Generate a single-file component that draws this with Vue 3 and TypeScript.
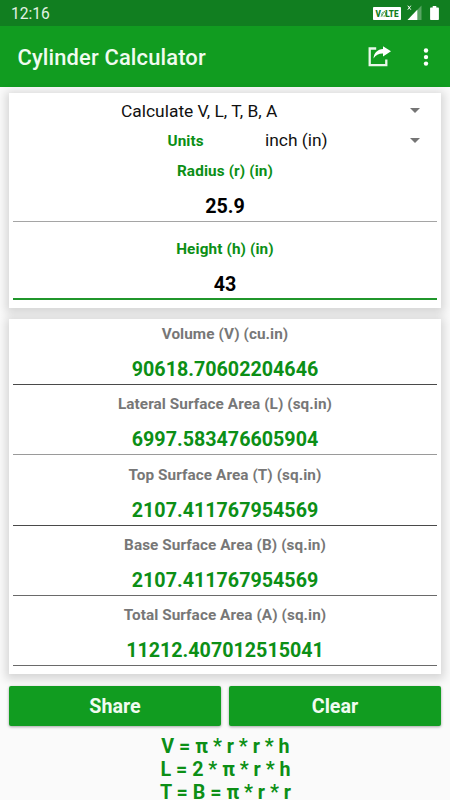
<script setup lang="ts">
import { ref } from 'vue'

interface Result {
  label: string
  value: string
  tone: string
}

const radius = ref('25.9')
const height = ref('43')

const results = ref<Result[]>([
  { label: 'Volume (V) (cu.in)', value: '90618.70602204646', tone: 'dark' },
  { label: 'Lateral Surface Area (L) (sq.in)', value: '6997.583476605904', tone: 'light' },
  { label: 'Top Surface Area (T) (sq.in)', value: '2107.411767954569', tone: 'dark' },
  { label: 'Base Surface Area (B) (sq.in)', value: '2107.411767954569', tone: 'mid' },
  { label: 'Total Surface Area (A) (sq.in)', value: '11212.407012515041', tone: 'mid' },
])

const formulas: string[] = ['V = π * r * r * h', 'L = 2 * π * r * h', 'T = B = π * r * r']

function clearAll(): void {
  radius.value = ''
  height.value = ''
  results.value.forEach((r) => (r.value = ''))
}
</script>

<template>
  <div class="screen">
    <div class="status">
      <span class="clock">12:16</span>
      <svg class="volte" width="28" height="13" viewBox="0 0 28 13">
        <rect width="28" height="13" rx="0.8" fill="#fff" />
        <text x="2.4" y="9.6" class="volte-text">V</text>
        <path d="M9.3 9.3a1.7 2.4 0 0 1 1.2-4.2M11.4 4.6a1.7 2.4 0 0 1-1 4.6M8 9.8l4.2-6.2" fill="none" stroke="#4a9a52" stroke-width="0.9" />
        <text x="12.2" y="9.6" class="volte-text">LTE</text>
      </svg>
      <svg class="signal" width="15" height="15" viewBox="0 0 15 15">
        <path d="M14.5 0.5V15H0.5z" fill="#fff" fill-opacity="0.3" />
        <path d="M10.3 4.7V15H0.5z" fill="#fff" />
        <path d="M0.8 0.7l3 4M3.8 0.7l-3 4" stroke="#fff" stroke-width="1" />
      </svg>
      <svg class="battery" width="9" height="14" viewBox="0 0 9 14">
        <path d="M2.7 0h3.6v1.5H8.2a.7.7 0 0 1 .7.7v11.1a.7.7 0 0 1-.7.7H.8a.7.7 0 0 1-.7-.7V2.2a.7.7 0 0 1 .7-.7h1.9z" fill="#fff" />
      </svg>
    </div>
    <header class="bar">
      <h1>Cylinder Calculator</h1>
      <svg class="share-icon" width="24" height="22" viewBox="0 0 24 22">
        <path d="M8.2 2.5H1.7V19.2H18.3V13.4" fill="none" stroke="#e9f7ea" stroke-width="2.3" />
        <path d="M15 0.2L23 5.3L15 10.6V7.6C10.8 7.5 7.8 8.8 5.5 12.6C6 6.7 9.6 3.5 15 3.1z" fill="#fff" />
      </svg>
      <svg class="more" width="6" height="20" viewBox="0 0 6 20">
        <circle cx="3" cy="3.5" r="2.2" fill="#fff" />
        <circle cx="3" cy="10.1" r="2.2" fill="#fff" />
        <circle cx="3" cy="16.6" r="2.2" fill="#fff" />
      </svg>
    </header>
    <main>
      <section class="card inputs">
        <div class="spinner">
          <span class="mode">Calculate V, L, T, B, A</span>
          <i class="caret"></i>
        </div>
        <div class="spinner">
          <span class="units">Units</span>
          <span class="unit">inch (in)</span>
          <i class="caret"></i>
        </div>
        <label class="field">
          <span>Radius (r) (in)</span>
          <input v-model="radius" type="text" />
        </label>
        <label class="field active">
          <span>Height (h) (in)</span>
          <input v-model="height" type="text" />
        </label>
      </section>
      <section class="card results">
        <div v-for="r in results" :key="r.label" class="result" :class="r.tone">
          <span class="name">{{ r.label }}</span>
          <span class="value">{{ r.value }}</span>
        </div>
      </section>
      <div class="actions">
        <button type="button">Share</button>
        <button type="button" @click="clearAll">Clear</button>
      </div>
      <div class="formulas">
        <span v-for="f in formulas" :key="f">{{ f }}</span>
      </div>
    </main>
  </div>
</template>

<style>
body {
  margin: 0;
  overflow: hidden;
}
</style>

<style scoped>
.screen {
  width: 450px;
  height: 800px;
  overflow: hidden;
  background: #fafafa;
  font-family: Roboto, "Liberation Sans", sans-serif;
  color: #000;
}
.status {
  height: 26px;
  box-sizing: border-box;
  background: #117e20;
  display: flex;
  align-items: flex-start;
  color: #fff;
}
.clock {
  flex: 1;
  padding-left: 11px;
  font-size: 15.6px;
  line-height: 29px;
  color: #e3f2e4;
}
.volte {
  margin: 7px 6px 0 0;
}
.volte-text {
  font-family: Roboto, sans-serif;
  font-size: 8.2px;
  font-weight: 900;
  fill: #117e20;
}
.signal {
  margin: 5px 8px 0 0;
}
.battery {
  margin: 6px 11px 0 0;
}
.bar {
  height: 61px;
  background: #119c20;
  display: flex;
  align-items: center;
}
h1 {
  flex: 1;
  margin: 0;
  padding: 2px 0 0 17.5px;
  font-size: 21.9px;
  font-weight: 500;
  letter-spacing: 0.15px;
  line-height: 61px;
  color: #f0fbf0;
}
.share-icon {
  margin-right: 31px;
}
.more {
  margin-right: 21px;
}
main {
  padding: 6px 9px 0;
  display: flex;
  flex-direction: column;
}
.card {
  background: #fff;
  box-shadow: 0 2px 9px 3px rgba(0, 0, 0, 0.15);
  padding: 0 4px;
  box-sizing: border-box;
}
.inputs {
  height: 215px;
  padding-top: 2px;
}
.spinner {
  height: 30px;
  display: flex;
  align-items: center;
  font-size: 17.4px;
  color: #111;
}
.mode {
  flex: 1;
  padding: 1px 0 0 108px;
}
.units {
  width: 97px;
  padding: 1px 0 0 154.5px;
  font-size: 15.3px;
  font-weight: 700;
  letter-spacing: 0.1px;
  color: #0c8f16;
}
.unit {
  flex: 1;
  padding-left: 0.5px;
}
.caret {
  width: 0;
  height: 0;
  margin-right: 17px;
  border: 5.5px solid transparent;
  border-top-color: #757575;
  border-bottom: 0;
}
.field {
  height: 78px;
  display: flex;
  flex-direction: column;
  align-items: center;
  font-size: 15.3px;
  font-weight: 700;
  letter-spacing: 0.12px;
  color: #0c8f16;
}
.field span {
  line-height: 32px;
  height: 32px;
}
input {
  width: 100%;
  height: 35px;
  box-sizing: border-box;
  padding: 4px 0 0;
  border: 0;
  border-bottom: 1.6px solid #a5a5a5;
  outline: 0;
  background: transparent;
  text-align: center;
  font: 700 19.7px Roboto, sans-serif;
  color: #000;
}
.active input {
  padding-top: 6px;
  border-bottom: 2px solid #20962b;
}
.results {
  margin-top: 11px;
  height: 355px;
}
.result {
  height: 70.25px;
  display: flex;
  flex-direction: column;
  align-items: center;
}
.name {
  height: 32px;
  line-height: 30px;
  font-size: 15.3px;
  font-weight: 700;
  letter-spacing: 0.07px;
  color: #777;
}
.value {
  width: 100%;
  height: 34px;
  box-sizing: border-box;
  border-bottom: 1px solid #4a4a4a;
  text-align: center;
  line-height: 37px;
  font-size: 19.7px;
  font-weight: 700;
  color: #0c8f16;
}
.light .value {
  border-bottom-color: #9a9a9a;
}
.mid .value {
  border-bottom-color: #6a6a6a;
}
.actions {
  margin-top: 12px;
  display: flex;
  gap: 8px;
}
button {
  flex: 1;
  height: 40px;
  padding: 1px 0 0;
  border: 0;
  border-radius: 2px;
  background: #119c20;
  box-shadow: 0 1px 3px rgba(0, 0, 0, 0.35);
  font: 700 19.7px Roboto, sans-serif;
  color: #f0fbf0;
}
.formulas {
  margin-top: 9px;
  padding-left: 1px;
  display: flex;
  flex-direction: column;
  align-items: center;
  font-size: 19.7px;
  font-weight: 700;
  line-height: 23px;
  color: #0c8f16;
}
.formulas span {
  white-space: nowrap;
}
</style>
